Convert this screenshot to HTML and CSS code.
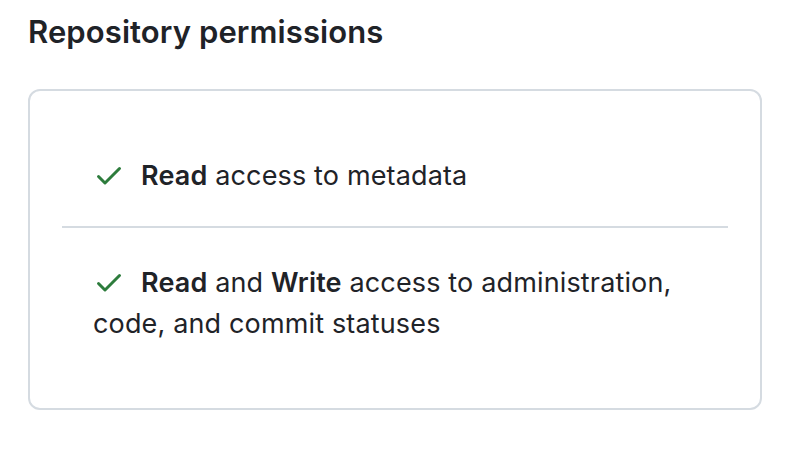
FILE: index.html
```html
<!DOCTYPE html>
<html>
<head>
<meta charset="utf-8">
<link rel="stylesheet" href="styles.css">
</head>
<body>
<div class="page">
  <h2 class="title">Repository permissions</h2>
  <div class="box">
    <ul class="perms">
      <li class="perm"><svg class="check" viewBox="0 0 16 16" width="32" height="32"><path d="M13.78 4.22a.75.75 0 0 1 0 1.06l-7.25 7.25a.75.75 0 0 1-1.06 0L2.22 9.28a.75.75 0 0 1 1.06-1.06L6 10.94l6.72-6.72a.75.75 0 0 1 1.06 0Z"/></svg><b>Read</b> access to metadata</li>
      <li class="perm"><svg class="check" viewBox="0 0 16 16" width="32" height="32"><path d="M13.78 4.22a.75.75 0 0 1 0 1.06l-7.25 7.25a.75.75 0 0 1-1.06 0L2.22 9.28a.75.75 0 0 1 1.06-1.06L6 10.94l6.72-6.72a.75.75 0 0 1 1.06 0Z"/></svg><b>Read</b> and <b>Write</b> access to administration, code, and commit statuses</li>
    </ul>
  </div>
</div>
</body>
</html>
```
FILE: styles.css
```css
html, body { margin: 0; padding: 0; background: #ffffff; }
body {
  font-family: Inter, "Noto Sans", "Liberation Sans", sans-serif;
  color: #1f2328;
}
.page { padding: 13px 28px 0 28px; width: 734px; }
.title {
  margin: 0 0 38px 0;
  font-size: 31px;
  font-weight: 600;
  line-height: 38px;
  letter-spacing: 0.1px;
}
.box {
  border: 2px solid #d5dbe1;
  border-radius: 12px;
  padding: 30px 32px 34px 32px;
}
.perms { list-style: none; margin: 0; padding: 0; }
.perm {
  padding: 34px 31px 30px 31px;
  font-size: 27px;
  line-height: 41px;
  letter-spacing: 0.15px;
}
.perm + .perm { border-top: 2px solid #d5dbe1; }
.perm b { font-weight: 600; }
.check {
  fill: #2d7c3c;
  vertical-align: -6px;
  margin-right: 16px;
}
```
